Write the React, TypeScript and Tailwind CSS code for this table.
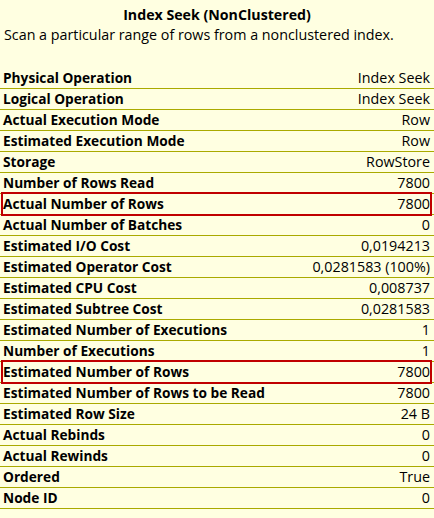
import React from "react";

const rows: { k: string; v: string; hl?: boolean }[] = [
  { k: "Physical Operation", v: "Index Seek" },
  { k: "Logical Operation", v: "Index Seek" },
  { k: "Actual Execution Mode", v: "Row" },
  { k: "Estimated Execution Mode", v: "Row" },
  { k: "Storage", v: "RowStore" },
  { k: "Number of Rows Read", v: "7800" },
  { k: "Actual Number of Rows", v: "7800", hl: true },
  { k: "Actual Number of Batches", v: "0" },
  { k: "Estimated I/O Cost", v: "0,0194213" },
  { k: "Estimated Operator Cost", v: "0,0281583 (100%)" },
  { k: "Estimated CPU Cost", v: "0,008737" },
  { k: "Estimated Subtree Cost", v: "0,0281583" },
  { k: "Estimated Number of Executions", v: "1" },
  { k: "Number of Executions", v: "1" },
  { k: "Estimated Number of Rows", v: "7800", hl: true },
  { k: "Estimated Number of Rows to be Read", v: "7800" },
  { k: "Estimated Row Size", v: "24 B" },
  { k: "Actual Rebinds", v: "0" },
  { k: "Actual Rewinds", v: "0" },
  { k: "Ordered", v: "True" },
  { k: "Node ID", v: "0" },
];

export default function App() {
  return (
    <div
      className="w-[434px] h-[518px] bg-[#ffffe1] text-black overflow-hidden"
      style={{ fontFamily: '"Open Sans", "Noto Sans", sans-serif' }}
    >
      <div className="pt-[5px] h-[25px] text-center text-[14.2px] font-bold leading-[20px]">
        Index Seek (NonClustered)
      </div>
      <div className="pl-[4px] h-[20px] text-[14.3px] leading-[20px] whitespace-nowrap">
        Scan a particular range of rows from a nonclustered index.
      </div>
      <div className="mt-[23px] flex flex-col">
        {rows.map((r) => (
          <div
            key={r.k}
            className="relative flex h-[21px] items-center justify-between border-b border-[#aaaa00] pl-[3px] pr-[4px] leading-[20px]"
          >
            <span className="font-bold text-[13.7px]">{r.k}</span>
            <span className="text-[14.3px]">{r.v}</span>
            {r.hl && (
              <div className="pointer-events-none absolute left-[1px] right-[2px] top-[-2px] bottom-[-2px] border-2 border-[#c00000]" />
            )}
          </div>
        ))}
      </div>
    </div>
  );
}
